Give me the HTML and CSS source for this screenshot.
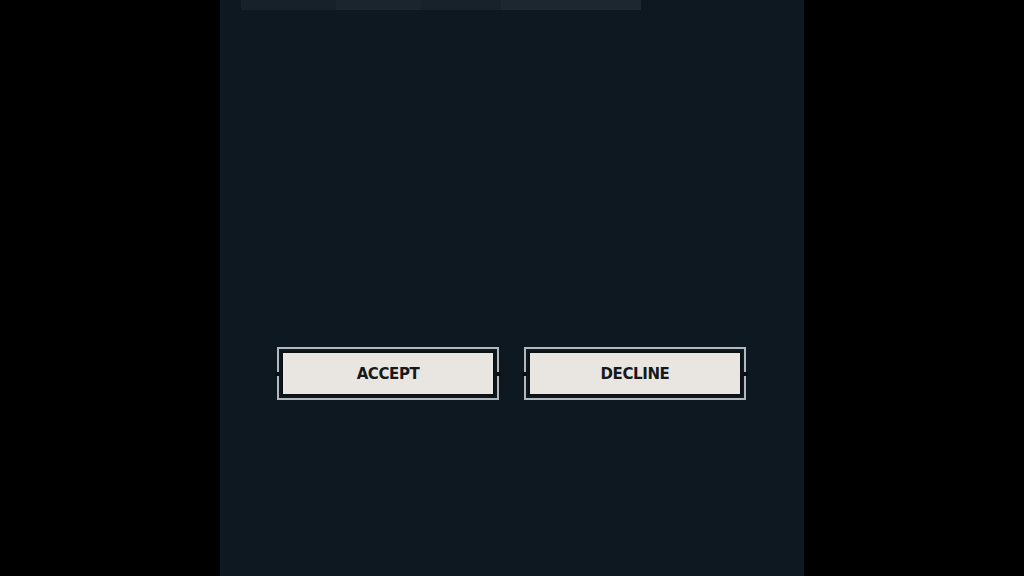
FILE: index.html
```html
<!DOCTYPE html>
<html lang="en">
<head>
    <meta charset="UTF-8">
    <meta name="viewport" content="width=device-width, initial-scale=1.0">
    <title>Contract Offer</title>
    <link rel="stylesheet" href="styles.css">
</head>
<body>
    <div class="panel">
        <div class="tab-strip">
            <span class="tab tab-a"></span>
            <span class="tab tab-b"></span>
            <span class="tab tab-c"></span>
            <span class="tab tab-d"></span>
        </div>

        <div class="actions">
            <button class="choice" id="acceptBtn"><span class="choice-face">ACCEPT</span></button>
            <button class="choice" id="declineBtn"><span class="choice-face">DECLINE</span></button>
        </div>
    </div>
</body>
</html>
```

FILE: styles.css
```css
* {
    margin: 0;
    padding: 0;
    box-sizing: border-box;
}
html, body {
    height: 100%;
}
body {
    background: #000;
    display: flex;
    justify-content: center;
    font-family: 'DejaVu Sans', sans-serif;
    overflow: hidden;
}
.panel {
    width: 584px;
    height: 576px;
    background: #0e1820;
    display: flex;
    flex-direction: column;
    align-items: center;
}
.tab-strip {
    width: 400px;
    height: 10px;
    margin-left: -143px;
    display: flex;
}
.tab {
    height: 100%;
    background: #17212a;
}
.tab-a { width: 95px; background: #16212a; }
.tab-b { width: 85px; background: #1a252e; }
.tab-c { width: 80px; background: #17222b; }
.tab-d { width: 140px; background: #1c272f; }

.actions {
    margin-top: 337px;
    margin-left: -1px;
    display: flex;
    gap: 25px;
}
.choice {
    position: relative;
    width: 222px;
    height: 53px;
    padding: 2px;
    background: transparent;
    border: 2px solid #b4b8ba;
    font-family: inherit;
    cursor: pointer;
}
/* little break in the frame at mid-height */
.choice::before,
.choice::after {
    content: '';
    position: absolute;
    top: 50%;
    width: 5px;
    height: 4px;
    margin-top: -2px;
    background: #0a1015;
}
.choice::before { left: -4px; }
.choice::after { right: -4px; }
.choice-face {
    display: flex;
    align-items: center;
    justify-content: center;
    width: 100%;
    height: 100%;
    background: #e9e6e1;
    border: 2px solid #0c1116;
    color: #16181a;
    font-weight: bold;
    font-size: 15px;
    letter-spacing: -0.4px;
}
.choice:hover .choice-face {
    background: #fff;
}
```
